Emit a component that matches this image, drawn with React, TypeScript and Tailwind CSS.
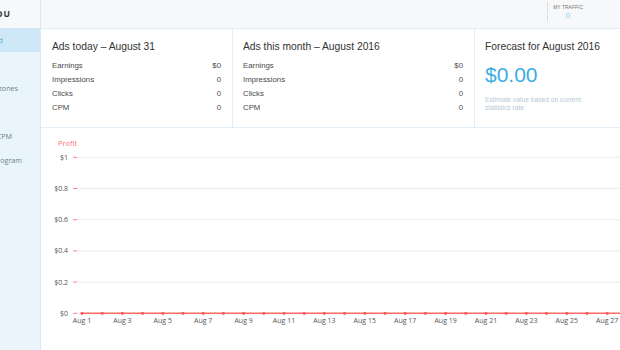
const menu = [
  { label: 'Dashboard', pr: 'pr-[37px]', active: true },
  { label: 'Statistics', pr: 'pr-[44px]' },
  { label: 'Ad zones', pr: 'pr-[22px]' },
  { label: 'Payments', pr: 'pr-[44px]' },
  { label: 'CPM', pr: 'pr-[28px]' },
  { label: 'Referral program', pr: 'pr-[18px]' },
];

const stats = ['Earnings', 'Impressions', 'Clicks', 'CPM'];

function StatCard({ title, values, className }: { title: string; values: string[]; className: string }) {
  return (
    <div className={`h-full shrink-0 border-r border-[#e2edf5] pt-[12px] pr-[11px] ${className}`}>
      <h2 className="text-[10.3px] leading-[12px] text-[#333]">{title}</h2>
      <div className="mt-[6px] text-[7.8px] leading-[14px] text-[#4a4a4a]">
        {stats.map((s, i) => (
          <div key={s} className="flex justify-between">
            <span>{s}</span>
            <span>{values[i]}</span>
          </div>
        ))}
      </div>
    </div>
  );
}

function ProfitChart() {
  const ys = [
    { label: '$1', y: 157.3 },
    { label: '$0.8', y: 188.5 },
    { label: '$0.6', y: 219.7 },
    { label: '$0.4', y: 250.9 },
    { label: '$0.2', y: 282.1 },
    { label: '$0', y: 313.3 },
  ];
  const days = Array.from({ length: 31 }, (_, i) => i + 1);
  const xOf = (d: number) => 81 + (d - 1) * 20.2;
  return (
    <svg viewBox="40 128 580 222" width="580" height="222" className="block" style={{ fontFamily: "'Open Sans', sans-serif" }}>
      <text x="57" y="145.8" fontSize="7.5" fill="#ff7373">Profit</text>
      {ys.map((t) => (
        <g key={t.label}>
          <line x1="76" x2="620" y1={t.y} y2={t.y} stroke="#efefef" strokeWidth="1.3" />
          <line x1="72" x2="76" y1={t.y} y2={t.y} stroke="#ff8080" strokeWidth="1" />
          <text x="67" y={t.y + 2.5} fontSize="7" fill="#555" textAnchor="end">{t.label}</text>
        </g>
      ))}
      <line x1="80" x2="620" y1="313.3" y2="313.3" stroke="#ff6b6b" strokeWidth="1.6" />
      {days.map((d) => (
        <circle key={d} cx={xOf(d)} cy="313.3" r="1.6" fill="#ff5c5c" />
      ))}
      {days.filter((d) => d % 2 === 1).map((d) => (
        <text key={d} x={xOf(d)} y="323.2" fontSize="7" fill="#555" textAnchor="middle">Aug {d}</text>
      ))}
    </svg>
  );
}

export default function App() {
  return (
    <div className="flex h-[350px] w-[620px] overflow-hidden bg-white font-['Liberation_Sans',Arial,sans-serif]">
      <aside className="w-[41px] shrink-0 overflow-hidden border-r border-[#dde8f0] bg-[#eaf4fb] font-['Open_Sans',sans-serif]">
        <div className="flex h-[28px] items-center justify-end whitespace-nowrap bg-[#f7f8f9] pr-[29px] pt-[1px] text-[8.5px] font-bold tracking-[1px] text-[#333]">
          ADS FOR YOU
        </div>
        {menu.map((m) => (
          <div
            key={m.label}
            className={`flex h-[24px] items-center justify-end whitespace-nowrap text-[7.2px] ${m.pr} ${
              m.active ? 'bg-[#cfe8f8] text-[#5aa7dc]' : 'text-[#6e7f8d]'
            }`}
          >
            {m.label}
          </div>
        ))}
      </aside>

      <main className="flex min-w-0 flex-1 flex-col">
        <header className="flex h-[29px] shrink-0 justify-end border-b border-[#e1ebf3] bg-[#f7f8f9] pr-[37px] pt-[3px]">
          <div className="h-[18px] border-l border-dotted border-[#c8c8c8] pl-[5px] text-center">
            <div className="text-[5px] leading-[8px] text-[#777]">MY TRAFFIC</div>
            <div className="text-[8px] leading-[9px] text-[#8ccbee]">0</div>
          </div>
        </header>

        <section className="flex h-[99px] shrink-0 border-b border-[#e2edf5]">
          <StatCard title="Ads today – August 31" values={['$0', '0', '0', '0']} className="w-[192px] pl-[11px]" />
          <StatCard title="Ads this month – August 2016" values={['$0', '0', '0', '0']} className="w-[242px] pl-[10px]" />
          <div className="h-full flex-1 pt-[12px] pl-[10px]">
            <h2 className="text-[10.3px] leading-[12px] text-[#333]">Forecast for August 2016</h2>
            <div className="mt-[10px] text-[21px] leading-[24px] text-[#3aaee3]">$0.00</div>
            <p className="mt-[9px] text-[6.7px] leading-[8px] text-[#b9c8d6]">
              Estimate value based on current
              <br />
              statistics rate
            </p>
          </div>
        </section>

        <ProfitChart />
      </main>
    </div>
  );
}
